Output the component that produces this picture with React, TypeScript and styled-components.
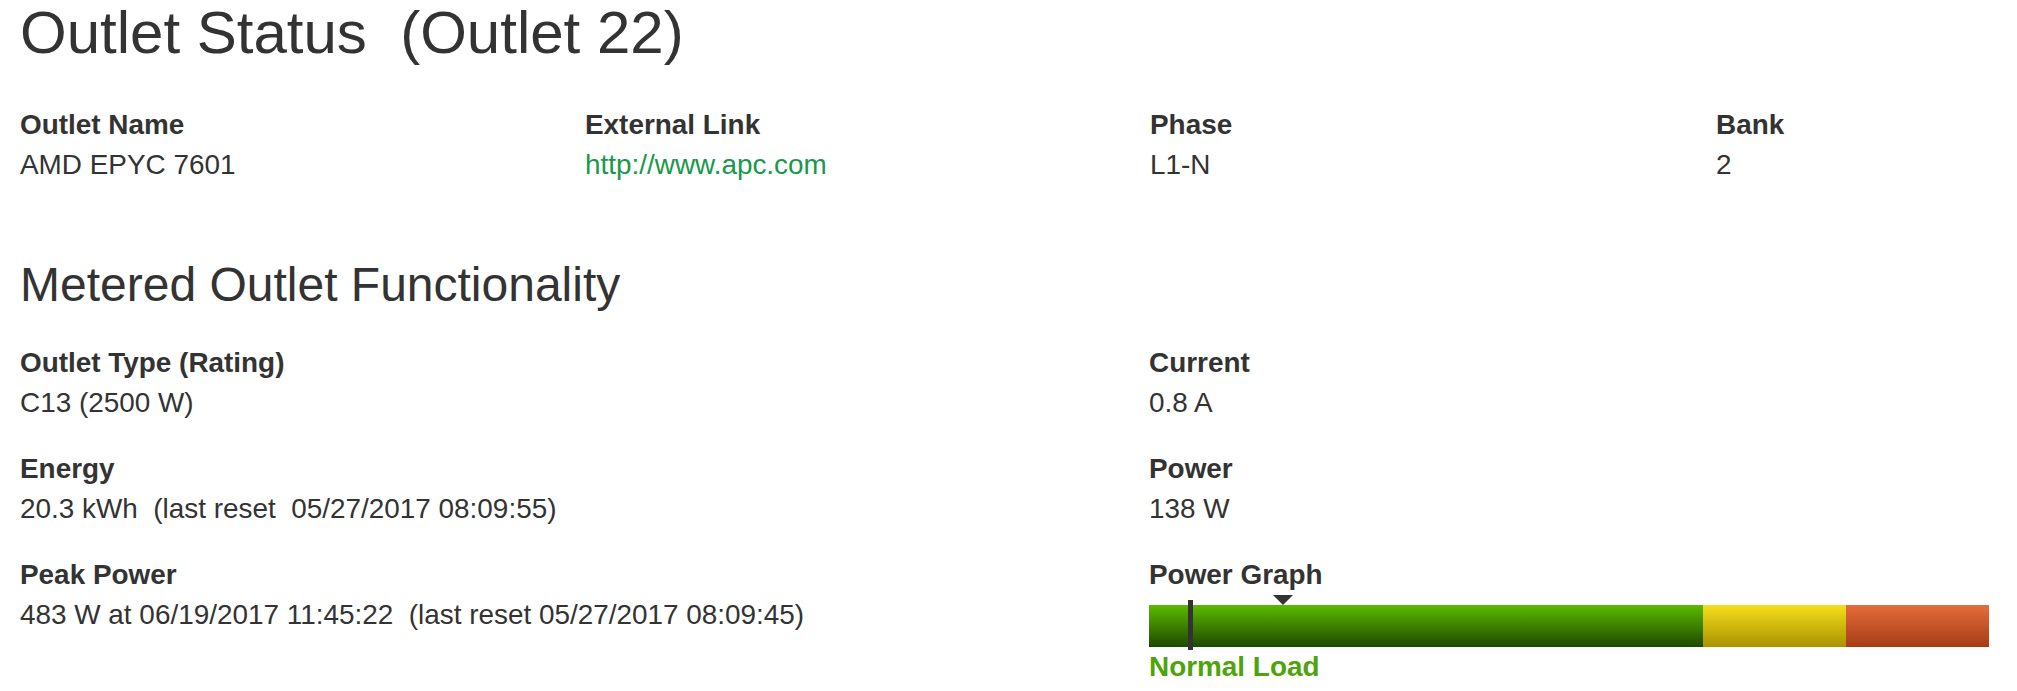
import React from "react";
import styled, { createGlobalStyle } from "styled-components";

const GlobalStyle = createGlobalStyle`
    html, body {
        margin: 0;
        padding: 0;
        background: #fff;
        overflow: hidden;
    }
    body {
        font-family: "Liberation Sans", Arial, sans-serif;
        color: #333;
    }
`;

const Page = styled.div`
    padding: 0 0 0 20px;
    width: 1997px;
`;

const Title = styled.h1`
    margin: 0;
    font-size: 60px;
    line-height: 66px;
    font-weight: 400;
    white-space: pre;
`;

const SectionTitle = styled.h2`
    margin: 73px 0 0;
    font-size: 48px;
    line-height: 53px;
    font-weight: 400;
`;

const InfoGrid = styled.div`
    display: grid;
    grid-template-columns: 565px 565px 566px 1fr;
    margin-top: 39px;
`;

const MeterGrid = styled.div`
    display: grid;
    grid-template-columns: 1129px 1fr;
    margin-top: 32px;
`;

const Column = styled.div`
    display: flex;
    flex-direction: column;
    gap: 26px;
`;

const Field = styled.div`
    font-size: 27.9px;
    line-height: 40px;
`;

const Label = styled.div`
    font-weight: 700;
`;

const Value = styled.div<{ $link?: boolean }>`
    white-space: pre;
    color: ${(p) => (p.$link ? "#17994a" : "#333")};
`;

const GraphWrap = styled.div`
    position: relative;
    width: 840px;
    padding-top: 10px;
`;

const Bar = styled.div`
    display: flex;
    height: 42px;
`;

const Segment = styled.div<{ $top: string; $bottom: string; $grow: number }>`
    flex: ${(p) => p.$grow} 0 0;
    background: linear-gradient(to bottom, ${(p) => p.$top}, ${(p) => p.$bottom});
`;

const Marker = styled.div`
    position: absolute;
    top: 5px;
    width: 5px;
    height: 50px;
    background: #333;
`;

const Pointer = styled.div`
    position: absolute;
    top: 0;
    width: 0;
    height: 0;
    border-left: 10px solid transparent;
    border-right: 10px solid transparent;
    border-top: 10px solid #333;
    transform: translateX(-50%);
`;

const LoadText = styled.div`
    font-size: 27.9px;
    line-height: 40px;
    font-weight: 700;
    color: #4ea40a;
`;

const info = [
    { label: "Outlet Name", value: "AMD EPYC 7601" },
    { label: "External Link", value: "http://www.apc.com", link: true },
    { label: "Phase", value: "L1-N" },
    { label: "Bank", value: "2" },
];

const App: React.FC = () => (
    <>
        <GlobalStyle />
        <Page>
            <Title>{"Outlet Status  (Outlet 22)"}</Title>
            <InfoGrid>
                {info.map((f) => (
                    <Field key={f.label}>
                        <Label>{f.label}</Label>
                        <Value $link={f.link}>{f.value}</Value>
                    </Field>
                ))}
            </InfoGrid>

            <SectionTitle>Metered Outlet Functionality</SectionTitle>
            <MeterGrid>
                <Column>
                    <Field>
                        <Label>Outlet Type (Rating)</Label>
                        <Value>C13 (2500 W)</Value>
                    </Field>
                    <Field>
                        <Label>Energy</Label>
                        <Value>{"20.3 kWh  (last reset  05/27/2017 08:09:55)"}</Value>
                    </Field>
                    <Field>
                        <Label>Peak Power</Label>
                        <Value>{"483 W at 06/19/2017 11:45:22  (last reset 05/27/2017 08:09:45)"}</Value>
                    </Field>
                </Column>
                <Column>
                    <Field>
                        <Label>Current</Label>
                        <Value>0.8 A</Value>
                    </Field>
                    <Field>
                        <Label>Power</Label>
                        <Value>138 W</Value>
                    </Field>
                    <div>
                        <Field>
                            <Label>Power Graph</Label>
                        </Field>
                        <GraphWrap>
                            <Bar>
                                <Segment $grow={554} $top="#5cbb00" $bottom="#1e4800" />
                                <Segment $grow={143} $top="#f6de1c" $bottom="#a99200" />
                                <Segment $grow={143} $top="#e46d3c" $bottom="#a63c16" />
                            </Bar>
                            <Marker style={{ left: 39 }} />
                            <Pointer style={{ left: 134 }} />
                        </GraphWrap>
                        <LoadText>Normal Load</LoadText>
                    </div>
                </Column>
            </MeterGrid>
        </Page>
    </>
);

export default App;
